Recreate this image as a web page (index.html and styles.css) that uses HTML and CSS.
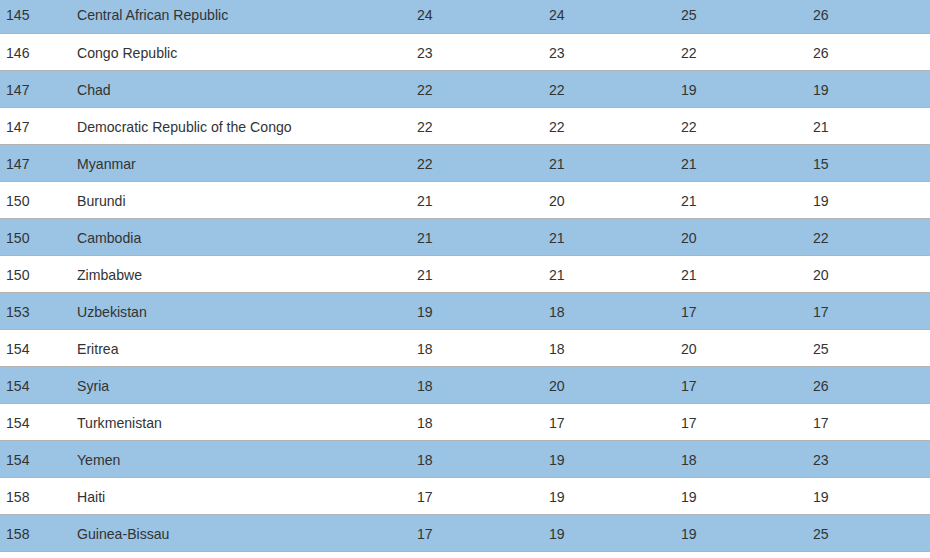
FILE: index.html
```html
<!DOCTYPE html>
<html>
<head>
<meta charset="utf-8">
<link rel="stylesheet" href="styles.css">
</head>
<body>
<div class="wrap">
<table class="ranks">
<tbody>
<tr class="alt"><td class="rank">145</td><td class="country">Central African Republic</td><td class="n">24</td><td class="n">24</td><td class="n">25</td><td class="n">26</td></tr>
<tr><td class="rank">146</td><td class="country">Congo Republic</td><td class="n">23</td><td class="n">23</td><td class="n">22</td><td class="n">26</td></tr>
<tr class="alt"><td class="rank">147</td><td class="country">Chad</td><td class="n">22</td><td class="n">22</td><td class="n">19</td><td class="n">19</td></tr>
<tr><td class="rank">147</td><td class="country">Democratic Republic of the Congo</td><td class="n">22</td><td class="n">22</td><td class="n">22</td><td class="n">21</td></tr>
<tr class="alt"><td class="rank">147</td><td class="country">Myanmar</td><td class="n">22</td><td class="n">21</td><td class="n">21</td><td class="n">15</td></tr>
<tr><td class="rank">150</td><td class="country">Burundi</td><td class="n">21</td><td class="n">20</td><td class="n">21</td><td class="n">19</td></tr>
<tr class="alt"><td class="rank">150</td><td class="country">Cambodia</td><td class="n">21</td><td class="n">21</td><td class="n">20</td><td class="n">22</td></tr>
<tr><td class="rank">150</td><td class="country">Zimbabwe</td><td class="n">21</td><td class="n">21</td><td class="n">21</td><td class="n">20</td></tr>
<tr class="alt"><td class="rank">153</td><td class="country">Uzbekistan</td><td class="n">19</td><td class="n">18</td><td class="n">17</td><td class="n">17</td></tr>
<tr><td class="rank">154</td><td class="country">Eritrea</td><td class="n">18</td><td class="n">18</td><td class="n">20</td><td class="n">25</td></tr>
<tr class="alt"><td class="rank">154</td><td class="country">Syria</td><td class="n">18</td><td class="n">20</td><td class="n">17</td><td class="n">26</td></tr>
<tr><td class="rank">154</td><td class="country">Turkmenistan</td><td class="n">18</td><td class="n">17</td><td class="n">17</td><td class="n">17</td></tr>
<tr class="alt"><td class="rank">154</td><td class="country">Yemen</td><td class="n">18</td><td class="n">19</td><td class="n">18</td><td class="n">23</td></tr>
<tr><td class="rank">158</td><td class="country">Haiti</td><td class="n">17</td><td class="n">19</td><td class="n">19</td><td class="n">19</td></tr>
<tr class="alt"><td class="rank">158</td><td class="country">Guinea-Bissau</td><td class="n">17</td><td class="n">19</td><td class="n">19</td><td class="n">25</td></tr>
</tbody>
</table>
</div>
</body>
</html>
```
FILE: styles.css
```css
html, body {
  margin: 0;
  padding: 0;
  background: #ffffff;
}
.wrap {
  margin-top: -4px;
  overflow: hidden;
}
.ranks {
  width: 930px;
  border-collapse: collapse;
  table-layout: fixed;
  font-family: "Liberation Sans", Arial, sans-serif;
  font-size: 14.1px;
  color: #333333;
}
.ranks tr {
  height: 37px;
  border-bottom: 1px solid #b3b3b3;
}
.ranks tr.alt {
  background: #9ac3e4;
}
.ranks td {
  padding: 2px 0 0 0;
  vertical-align: middle;
  white-space: nowrap;
}
.ranks td.rank {
  width: 77px;
  padding-left: 6px;
  box-sizing: border-box;
}
.ranks td.country {
  width: 340px;
}
.ranks td.n {
  width: 132px;
}
.ranks td.n:last-child {
  width: auto;
}
```
